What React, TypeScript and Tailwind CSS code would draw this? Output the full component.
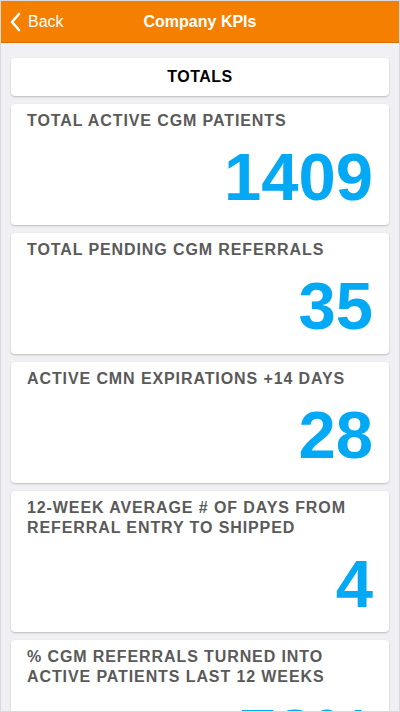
import React from "react";

type Kpi = {
  label: string;
  value: string;
};

const kpis: Kpi[] = [
  { label: "Total Active CGM Patients", value: "1409" },
  { label: "Total Pending CGM Referrals", value: "35" },
  { label: "Active CMN Expirations +14 Days", value: "28" },
  { label: "12-Week Average # of Days from Referral Entry to Shipped", value: "4" },
  { label: "% CGM Referrals Turned into Active Patients Last 12 Weeks", value: "78%" },
];

function KpiCard({ kpi }: { kpi: Kpi }) {
  return (
    <div className="bg-white rounded-[4px] shadow-[0_1px_2px_rgba(0,0,0,0.22)] pt-[7px] pb-[13px] pl-4 pr-4 shrink-0">
      <p className="text-[16px] leading-5 font-bold uppercase tracking-[0.9px] text-[#5a5a5a]">
        {kpi.label}
      </p>
      <p className="mt-[11px] text-right text-[67px] leading-[70px] font-bold text-[#03a9f4]">
        {kpi.value}
      </p>
    </div>
  );
}

export default function App() {
  return (
    <div
      className="h-screen overflow-hidden flex flex-col bg-[#efeff4] border border-[#d9d9de]"
      style={{ fontFamily: '"Liberation Sans", Arial, sans-serif' }}
    >
      {/* Nav bar */}
      <header className="relative h-[42px] shrink-0 flex items-center justify-center bg-[#f57f00] border-b border-[#d96f00] text-white">
        <button className="absolute left-[8px] top-0 h-full flex items-center gap-[5px] text-[16px]">
          <svg width="14" height="20" viewBox="0 0 14 20" fill="none">
            <polyline
              points="10,2 3,10 10,18"
              stroke="white"
              strokeWidth="2.6"
              strokeLinecap="round"
              strokeLinejoin="round"
            />
          </svg>
          <span>Back</span>
        </button>
        <h1 className="text-[16px] font-bold">Company KPIs</h1>
      </header>

      {/* Cards */}
      <main className="flex flex-col gap-2 px-[10px] pt-[15px]">
        <div className="bg-white rounded-[4px] shadow-[0_1px_2px_rgba(0,0,0,0.22)] py-[9px] text-center shrink-0">
          <p className="text-[16px] leading-5 font-bold tracking-[0.5px] text-black">TOTALS</p>
        </div>
        {kpis.map((kpi) => (
          <KpiCard key={kpi.label} kpi={kpi} />
        ))}
      </main>
    </div>
  );
}
